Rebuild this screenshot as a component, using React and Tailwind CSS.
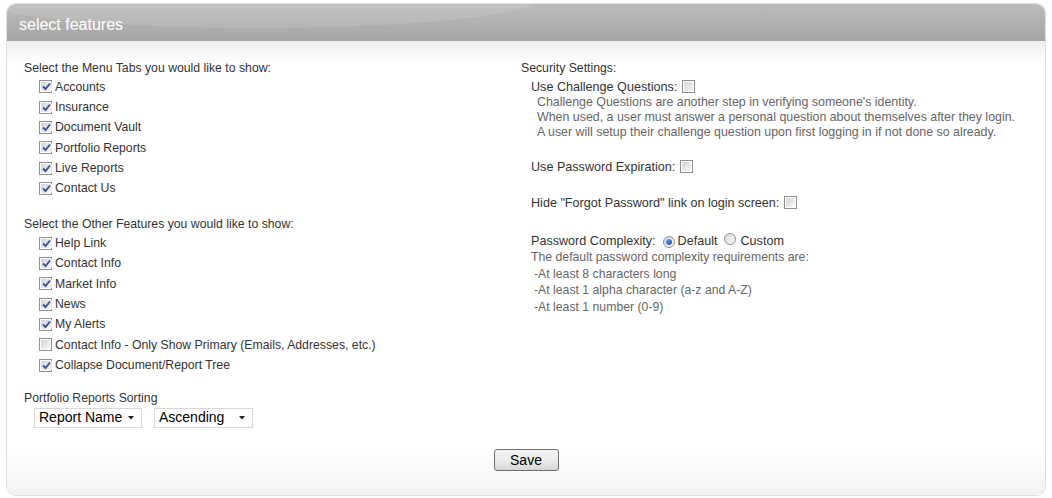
import React from "react";

const menuTabs = ["Accounts", "Insurance", "Document Vault", "Portfolio Reports", "Live Reports", "Contact Us"];

const otherFeatures = [
  { label: "Help Link", checked: true },
  { label: "Contact Info", checked: true },
  { label: "Market Info", checked: true },
  { label: "News", checked: true },
  { label: "My Alerts", checked: true },
  { label: "Contact Info - Only Show Primary (Emails, Addresses, etc.)", checked: false },
  { label: "Collapse Document/Report Tree", checked: true },
];

// old windows-style checkbox
function Box({ checked }) {
  return (
    <span className="inline-flex w-[13px] h-[13px] shrink-0 border border-[#8e8f8f] bg-white p-px">
      <span className="flex-1 flex items-center justify-center bg-linear-to-br from-[#d2d4d8] to-[#f7f7f7]">
        {checked && (
          <svg width="11" height="11" viewBox="0 0 11 11">
            <path d="M2 5.5 L4.5 8 L9 2.5" fill="none" stroke="#3e5591" strokeWidth="1.9" />
          </svg>
        )}
      </span>
    </span>
  );
}

function Radio({ checked }) {
  return (
    <span className="inline-flex w-[12px] h-[12px] shrink-0 rounded-full border border-[#8e8f8f] bg-linear-to-br from-[#d8d8d8] to-[#fbfbfb] items-center justify-center">
      {checked && <span className="w-[6px] h-[6px] rounded-full bg-linear-to-br from-[#6ea0e8] to-[#1c4fa8]" />}
    </span>
  );
}

function CheckRow({ label, checked }) {
  return (
    <div className="h-[20.4px] flex items-center pl-[15px]">
      <Box checked={checked} />
      <span className="ml-[3px]">{label}</span>
    </div>
  );
}

function Select({ value, width }) {
  return (
    <div className={`${width} h-[20px] border border-[#d6d6de] bg-white flex items-center justify-between pl-[4px] pr-[7px] text-[14px] text-black`}>
      <span>{value}</span>
      <svg width="6" height="4" viewBox="0 0 6 4">
        <path d="M0 0 L6 0 L3 3.5 Z" fill="#222" />
      </svg>
    </div>
  );
}

export default function App() {
  return (
    <div className="w-[1052px] h-[498px] bg-white pt-[3px] pl-[6px]" style={{ fontFamily: '"Liberation Sans", Arial, sans-serif' }}>
      <div className="w-[1040px] h-[493px] flex flex-col rounded-[10px] border border-[#dedede] overflow-hidden">
        {/* header */}
        <div className="relative h-[37px] shrink-0 bg-linear-to-b from-[#bdbcba] to-[#a5a5a5] flex items-center pl-[12px] pt-[4px] overflow-hidden">
          <div className="absolute -left-[30px] -top-[34px] w-[560px] h-[58px] rounded-[50%] bg-white/10" />
          <span className="relative text-white text-[16px]">select features</span>
        </div>

        {/* body */}
        <div className="flex-1 flex flex-col bg-linear-to-b from-[#efefef] via-white via-[5%] to-white text-[12.25px] text-[#333]">
          <div className="flex-1 flex flex-col bg-linear-to-t from-[#f2f2f2] via-white via-[10%] to-transparent">
            <div className="grid grid-cols-[497px_1fr] pt-[17px] pl-[17px]">
              {/* left column */}
              <div>
                <div className="h-[20px] flex items-center mb-[-1.5px]">Select the Menu Tabs you would like to show:</div>
                {menuTabs.map((t) => (
                  <CheckRow key={t} label={t} checked />
                ))}
                <div className="h-[20px] flex items-center mt-[15px] mb-[-1px]">Select the Other Features you would like to show:</div>
                {otherFeatures.map((f) => (
                  <CheckRow key={f.label} label={f.label} checked={f.checked} />
                ))}
                <div className="h-[16px] flex items-center mt-[15px]">Portfolio Reports Sorting</div>
                <div className="flex gap-[12px] pl-[10px] mt-px">
                  <Select value="Report Name" width="w-[108px]" />
                  <Select value="Ascending" width="w-[99px]" />
                </div>
              </div>

              {/* right column */}
              <div>
                <div className="h-[20px] flex items-center">Security Settings:</div>
                <div className="pl-[10px]">
                  <div className="h-[19px] flex items-center text-[12.6px]">
                    <span>Use Challenge Questions:</span>
                    <span className="ml-[5px]"><Box checked={false} /></span>
                  </div>
                  <div className="pl-[6px] text-[#666] text-[12.4px] leading-[15px] mt-[-2px]">
                    <div>Challenge Questions are another step in verifying someone's identity.</div>
                    <div>When used, a user must answer a personal question about themselves after they login.</div>
                    <div>A user will setup their challenge question upon first logging in if not done so already.</div>
                  </div>
                  <div className="h-[19px] flex items-center text-[12.6px] mt-[18px]">
                    <span>Use Password Expiration:</span>
                    <span className="ml-[5px]"><Box checked={false} /></span>
                  </div>
                  <div className="h-[19px] flex items-center text-[12.6px] mt-[17px]">
                    <span>Hide "Forgot Password" link on login screen:</span>
                    <span className="ml-[5px]"><Box checked={false} /></span>
                  </div>
                  <div className="h-[19px] flex items-center text-[12.6px] mt-[19px]">
                    <span>Password Complexity:</span>
                    <span className="ml-[7px]"><Radio checked /></span>
                    <span className="ml-[3px]">Default</span>
                    <span className="ml-[6px]"><Radio checked={false} /></span>
                    <span className="ml-[5px]">Custom</span>
                  </div>
                  <div className="text-[#666] leading-[16.7px] mt-[-2px]">
                    <div>The default password complexity requirements are:</div>
                    <div className="pl-[3px]">-At least 8 characters long</div>
                    <div className="pl-[3px]">-At least 1 alpha character (a-z and A-Z)</div>
                    <div className="pl-[3px]">-At least 1 number (0-9)</div>
                  </div>
                </div>
              </div>
            </div>

            <div className="flex justify-center mt-[21px]">
              <button className="w-[65px] h-[22px] rounded-[3px] border border-[#707070] bg-linear-to-b from-[#f3f3f3] via-[#ebebeb] to-[#d6d6d6] text-[14px] text-black">
                Save
              </button>
            </div>
          </div>
        </div>
      </div>
    </div>
  );
}
